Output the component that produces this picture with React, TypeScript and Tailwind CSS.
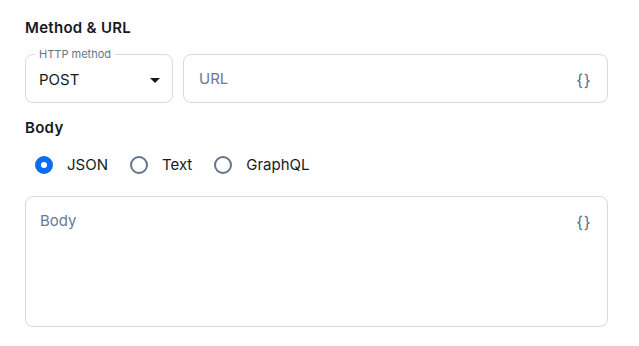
import { useState } from 'react';

const font = { fontFamily: 'Inter, "Noto Sans", sans-serif' };

function Braces() {
    return (
        <span className="text-[16px] tracking-[0.5px] text-[#5b6b86] select-none">
            {'{}'}
        </span>
    );
}

function Radio({
    label,
    checked,
    onClick,
}: {
    label: string;
    checked: boolean;
    onClick: () => void;
}) {
    return (
        <button
            className="flex items-center gap-[14px] pl-[10px] pr-[12px] cursor-pointer"
            onClick={onClick}
        >
            {checked ? (
                <span className="w-[18px] h-[18px] rounded-full border-[6px] border-[#0b6cf5] bg-white" />
            ) : (
                <span className="w-[18px] h-[18px] rounded-full border-2 border-[#64748b] bg-white" />
            )}
            <span className="text-[15px] text-[#141a24]">{label}</span>
        </button>
    );
}

export default function App() {
    const [bodyType, setBodyType] = useState('JSON');

    return (
        <div className="w-[639px] h-[346px] bg-white pl-[25px] pr-[31px] pt-[18px]" style={font}>
            {/* Method & URL */}
            <h2 className="text-[15px] font-semibold tracking-[0.3px] text-[#141a24] leading-[20px]">
                Method &amp; URL
            </h2>
            <div className="flex gap-[10px] mt-[16px]">
                <div className="relative w-[148px] h-[49px] border border-[#d3dbe5] rounded-[8px] flex items-center pl-[13px] pr-[12px] pt-[3px]">
                    <span className="absolute -top-[8px] left-[9px] px-[4px] bg-white text-[11px] leading-[14px] text-[#64748b]">
                        HTTP method
                    </span>
                    <span className="text-[15px] text-[#141a24]">POST</span>
                    <svg className="ml-auto" width="10" height="5" viewBox="0 0 10 5">
                        <path d="M0 0h10L5 5z" fill="#141a24" />
                    </svg>
                </div>
                <div className="flex-1 h-[49px] border border-[#d3dbe5] rounded-[8px] flex items-center pl-[15px] pr-[16px] pt-[2px]">
                    <span className="text-[15px] text-[#6b7894]">URL</span>
                    <span className="ml-auto">
                        <Braces />
                    </span>
                </div>
            </div>

            {/* Body */}
            <h2 className="mt-[15px] text-[15px] font-semibold tracking-[0.3px] text-[#141a24] leading-[20px]">
                Body
            </h2>
            <div className="flex items-center mt-[15px] h-[24px]">
                {['JSON', 'Text', 'GraphQL'].map((t) => (
                    <Radio
                        key={t}
                        label={t}
                        checked={bodyType === t}
                        onClick={() => setBodyType(t)}
                    />
                ))}
            </div>
            <div className="mt-[19px] h-[131px] border border-[#d3dbe5] rounded-[8px] flex items-start pl-[14px] pr-[16px] pt-[13px]">
                <span className="text-[15px] text-[#6b7894]">Body</span>
                <span className="ml-auto">
                    <Braces />
                </span>
            </div>
        </div>
    );
}
